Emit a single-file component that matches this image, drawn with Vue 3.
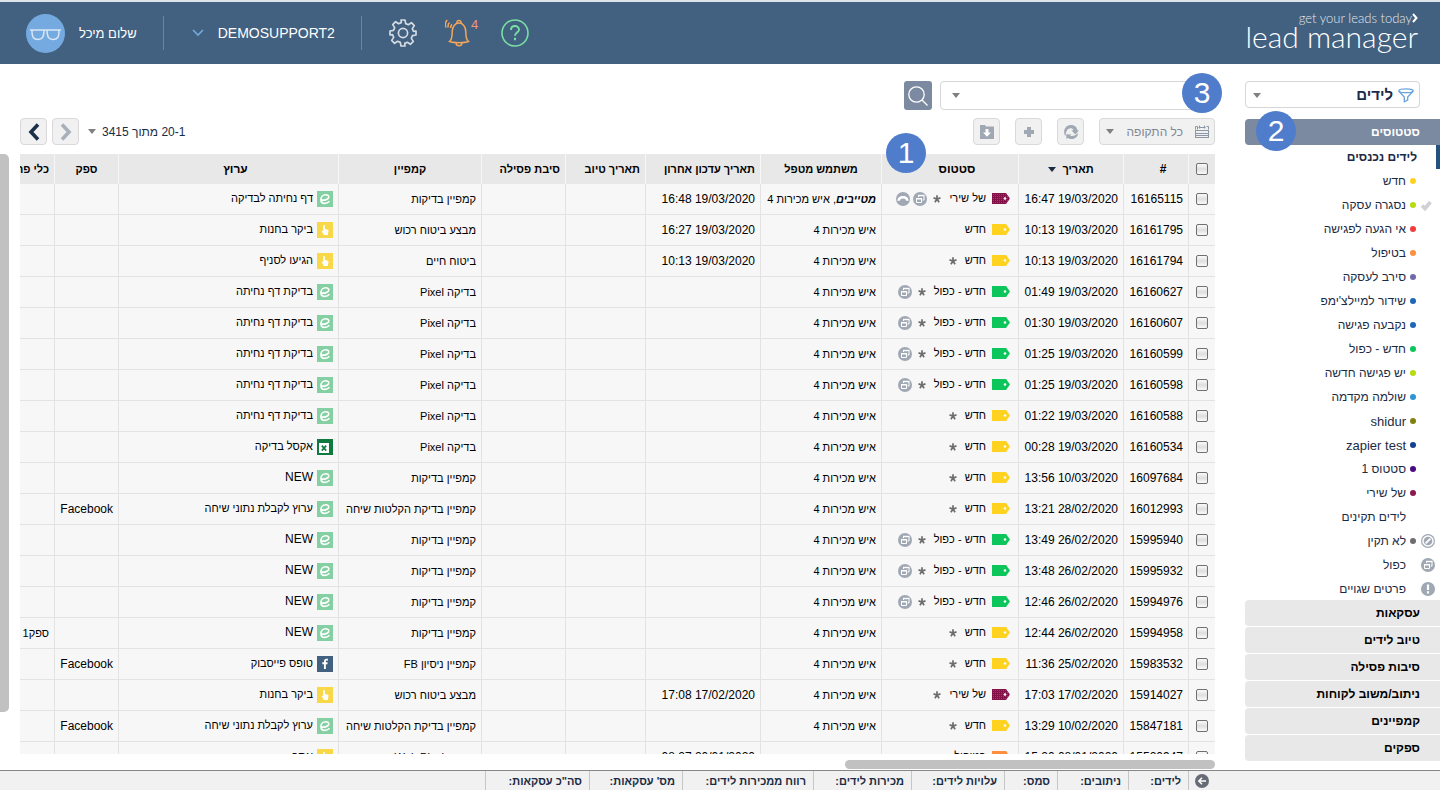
<script setup>
import { ref } from 'vue'

const yellow = '#ffd21f'
const green = '#0cc55b'
const maroon = 'url(#weave)'
const orange = '#ff8f3f'

const view = ref('leads')
const query = ref('')

const hebrew = (text) => /[א-ת]/.test(text || '')

const statuses = [
  { label: 'חדש', dot: '#ffd21f' },
  { label: 'נסגרה עסקה', dot: '#b5dc10', mark: 'check' },
  { label: 'אי הגעה לפגישה', dot: '#f23c3c' },
  { label: 'בטיפול', dot: '#ff8f3f' },
  { label: 'סירב לעסקה', dot: '#6f6ab0' },
  { label: "שידור למיילצ'ימפ", dot: '#1d67b5' },
  { label: 'נקבעה פגישה', dot: '#1d67b5' },
  { label: 'חדש - כפול', dot: '#0cc55b' },
  { label: 'יש פגישה חדשה', dot: '#b5dc10' },
  { label: 'שולמה מקדמה', dot: '#2f93d6' },
  { label: 'shidur', dot: '#808010' },
  { label: 'zapier test', dot: '#144091' },
  { label: 'סטטוס 1', dot: '#4b0a82' },
  { label: 'של שירי', dot: '#8b1a4f' },
  { label: 'לידים תקינים' },
  { label: 'לא תקין', dot: '#6e6e72', mark: 'ban' },
  { label: 'כפול', mark: 'dup' },
  { label: 'פרטים שגויים', mark: 'alert' },
]

const sections = ['עסקאות', 'טיוב לידים', 'סיבות פסילה', 'ניתוב/משוב לקוחות', 'קמפיינים', 'ספקים']

const columns = [
  { key: 'id', label: '#', align: 'offset' },
  { key: 'date', label: 'תאריך', sorted: true },
  { key: 'status', label: 'סטטוס', align: 'offset' },
  { key: 'user', label: 'משתמש מטפל' },
  { key: 'updated', label: 'תאריך עדכון אחרון', align: 'start' },
  { key: 'refined', label: 'תאריך טיוב', align: 'start' },
  { key: 'reason', label: 'סיבת פסילה', align: 'start' },
  { key: 'campaign', label: 'קמפיין' },
  { key: 'channel', label: 'ערוץ', align: 'offset' },
  { key: 'supplier', label: 'ספק' },
  { key: 'media', label: 'כלי פרסום', align: 'start' },
]

const seller = 'איש מכירות 4'
const fresh = { text: 'חדש', color: yellow, star: true }
const twice = { text: 'חדש - כפול', color: green, star: true, dup: true }

const rows = [
  { id: '16165115', date: '19/03/2020 16:47', status: { text: 'של שירי', color: maroon, star: true, dup: true, call: true }, lead: 'מטייבים', user: seller, updated: '19/03/2020 16:48', campaign: 'קמפיין בדיקות', icon: 'e', channel: 'דף נחיתה לבדיקה' },
  { id: '16161795', date: '19/03/2020 10:13', status: { text: 'חדש', color: yellow }, user: seller, updated: '19/03/2020 16:27', campaign: 'מבצע ביטוח רכוש', icon: 'hand', channel: 'ביקר בחנות' },
  { id: '16161794', date: '19/03/2020 10:13', status: fresh, user: seller, updated: '19/03/2020 10:13', campaign: 'ביטוח חיים', icon: 'hand', channel: 'הגיעו לסניף' },
  { id: '16160627', date: '19/03/2020 01:49', status: twice, user: seller, campaign: 'בדיקה Pixel', icon: 'e', channel: 'בדיקת דף נחיתה' },
  { id: '16160607', date: '19/03/2020 01:30', status: twice, user: seller, campaign: 'בדיקה Pixel', icon: 'e', channel: 'בדיקת דף נחיתה' },
  { id: '16160599', date: '19/03/2020 01:25', status: twice, user: seller, campaign: 'בדיקה Pixel', icon: 'e', channel: 'בדיקת דף נחיתה' },
  { id: '16160598', date: '19/03/2020 01:25', status: twice, user: seller, campaign: 'בדיקה Pixel', icon: 'e', channel: 'בדיקת דף נחיתה' },
  { id: '16160588', date: '19/03/2020 01:22', status: fresh, user: seller, campaign: 'בדיקה Pixel', icon: 'e', channel: 'בדיקת דף נחיתה' },
  { id: '16160534', date: '19/03/2020 00:28', status: fresh, user: seller, campaign: 'בדיקה Pixel', icon: 'x', channel: 'אקסל בדיקה' },
  { id: '16097684', date: '10/03/2020 13:56', status: fresh, user: seller, campaign: 'קמפיין בדיקות', icon: 'e', channel: 'NEW' },
  { id: '16012993', date: '28/02/2020 13:21', status: fresh, user: seller, campaign: 'קמפיין בדיקת הקלטות שיחה', icon: 'e', channel: 'ערוץ לקבלת נתוני שיחה', supplier: 'Facebook' },
  { id: '15995940', date: '26/02/2020 13:49', status: twice, user: seller, campaign: 'קמפיין בדיקות', icon: 'e', channel: 'NEW' },
  { id: '15995932', date: '26/02/2020 13:48', status: twice, user: seller, campaign: 'קמפיין בדיקות', icon: 'e', channel: 'NEW' },
  { id: '15994976', date: '26/02/2020 12:46', status: twice, user: seller, campaign: 'קמפיין בדיקות', icon: 'e', channel: 'NEW' },
  { id: '15994958', date: '26/02/2020 12:44', status: fresh, user: seller, campaign: 'קמפיין בדיקות', icon: 'e', channel: 'NEW', media: 'ספק1' },
  { id: '15983532', date: '25/02/2020 11:36', status: fresh, user: seller, campaign: 'קמפיין ניסיון FB', icon: 'f', channel: 'טופס פייסבוק', supplier: 'Facebook' },
  { id: '15914027', date: '17/02/2020 17:03', status: { text: 'של שירי', color: maroon, star: true }, user: seller, updated: '17/02/2020 17:08', campaign: 'מבצע ביטוח רכוש', icon: 'hand', channel: 'ביקר בחנות' },
  { id: '15847181', date: '10/02/2020 13:29', status: fresh, user: seller, campaign: 'קמפיין בדיקת הקלטות שיחה', icon: 'e', channel: 'ערוץ לקבלת נתוני שיחה', supplier: 'Facebook' },
  { id: '15520947', date: '08/01/2020 15:20', status: { text: 'בטיפול', color: orange }, user: '', updated: '20/01/2020 08:27', campaign: 'בדיקה Web Pixel', icon: 'hand', channel: 'אתר' },
]

const totals = ['לידים:', 'ניתובים:', 'סמס:', 'עלויות לידים:', 'מכירות לידים:', 'רווח ממכירות לידים:', "מס' עסקאות:", 'סה"כ עסקאות:']
</script>

<template>
  <div class="app" dir="rtl">
    <svg class="defs" width="0" height="0" aria-hidden="true">
      <pattern id="weave" width="2" height="2" patternUnits="userSpaceOnUse">
        <rect width="2" height="2" fill="#861048" />
        <rect x="1" y="1" width="1" height="1" fill="#a23a5c" />
      </pattern>
      <symbol id="dup" viewBox="0 0 14 14">
        <circle cx="7" cy="7" r="7" fill="#a0a8b4" />
        <path d="M5.500 5V3.500h5.500v4.500H9.500" fill="none" stroke="#fff" />
        <path d="M5 3.500h6.500" stroke="#fff" stroke-width="1.400" />
        <path d="M3.500 6.500h5v4h-5z" fill="#a0a8b4" stroke="#fff" />
        <path d="M3 6.800h6" stroke="#fff" stroke-width="1.400" />
      </symbol>
      <symbol id="call" viewBox="0 0 14 14">
        <circle cx="7" cy="7" r="7" fill="#a0a8b4" />
        <path d="M1.500 9C1 5.600 4 4 7 4s6 1.600 5.500 5L9.800 8.600 9.300 7a7 7 0 0 0-4.600 0L4.200 8.600z" fill="#fff" />
      </symbol>
      <symbol id="ban" viewBox="0 0 14 14">
        <circle cx="7" cy="7" r="6.400" fill="#fff" stroke="#a0a8b4" stroke-width="1.200" />
        <circle cx="7" cy="7" r="4.300" fill="#a0a8b4" />
        <path d="M4.600 9.400l4.800-4.800" stroke="#fff" stroke-width="1.800" />
      </symbol>
      <symbol id="alert" viewBox="0 0 14 14">
        <circle cx="7" cy="7" r="7" fill="#a0a8b4" />
        <path d="M5.900 2.500h2.200v5.500H5.900zM5.900 9.300h2.200v2.200H5.900z" fill="#fff" />
      </symbol>
      <symbol id="check" viewBox="0 0 14 14">
        <path d="M1 7.500l3 3 5.500-6.500" fill="none" stroke="#cfd1d6" stroke-width="3.600" />
      </symbol>
      <symbol id="star" viewBox="0 0 8 8">
        <path d="M4 4V.3M4 4L.5 2.900M4 4l3.500-1.100M4 4L1.900 7.200M4 4l2.100 3.200" fill="none" stroke="#6d6d6d" stroke-width="1.700" />
      </symbol>
      <symbol id="src-e" viewBox="0 0 16 16">
        <rect width="16" height="16" fill="#84d0a3" />
        <path d="M4 9c3.500.6 7.800-.6 7.800-3 0-1.300-1.200-2.200-3.100-2.200C5.700 3.800 3.900 6 3.900 8.500c0 2.400 1.500 3.900 3.800 3.900 2 0 3.400-.7 4.800-2.100" fill="none" stroke="#fff" stroke-width="1.600" />
      </symbol>
      <symbol id="src-hand" viewBox="0 0 16 16">
        <rect width="16" height="16" fill="#f8d848" />
        <path d="M6.200 3.200c.9-.6 1.700-.1 1.700.8v3l3 .8c.7.300.6 1 .5 1.600L10.800 13H6.900L4.700 9.300c.1-.8.900-.8 1.500-.2z" fill="#fff" />
      </symbol>
      <symbol id="src-x" viewBox="0 0 16 16">
        <rect width="16" height="16" fill="#0f7a40" />
        <rect x="2" y="4" width="10" height="10" fill="#fff" />
        <path d="M4.800 6.600l4.400 5M9.200 6.600l-4.400 5" stroke="#0f7a40" stroke-width="1.600" />
      </symbol>
      <symbol id="src-f" viewBox="0 0 16 16">
        <rect width="16" height="16" fill="#42607f" />
        <path d="M7.900 13V5.300c0-1.300.8-1.900 3-1.600M5.300 7.300h5.200" fill="none" stroke="#fff" stroke-width="1.900" />
      </symbol>
    </svg>

    <header class="top" dir="ltr">
      <div class="user">
        <svg width="39" height="39" viewBox="0 0 39 39" aria-hidden="true">
          <circle cx="19.500" cy="19.500" r="19.500" fill="#74aae0" />
          <path d="M4 16h31M6 16.300c0 7 1.500 9.200 6 9.200s5.800-2.500 6-9.200M21 16.300c.2 6.700 1.500 9.200 6 9.200s6-2.200 6-9.200" fill="none" stroke="#d8e6f6" stroke-width="1.500" />
        </svg>
        <span>שלום מיכל</span>
      </div>
      <button class="account" type="button">
        <svg width="12" height="8" viewBox="0 0 12 8" aria-hidden="true"><path d="M1 1l5 5 5-5" fill="none" stroke="#74aae0" stroke-width="1.600" /></svg>
        <span>DEMOSUPPORT2</span>
      </button>
      <nav class="tools">
        <button type="button" aria-label="הגדרות">
          <svg width="28" height="28" viewBox="0 0 28 28" fill="none" stroke="#d5dbe2" stroke-width="1.700" stroke-linejoin="round">
            <path d="M12 1h4l.7 3.600 2.700 1.100 3-2 2.900 2.900-2 3 1.100 2.700L27 12v4l-3.600.7-1.100 2.700 2 3-2.900 2.900-3-2-2.700 1.100L16 27h-4l-.7-3.600-2.700-1.100-3 2-2.900-2.900 2-3-1.100-2.700L1 16v-4l3.600-.7 1.100-2.700-2-3 2.900-2.900 3 2 2.700-1.100z" />
            <circle cx="14" cy="14" r="4.600" />
          </svg>
        </button>
        <button type="button" class="bell" aria-label="התראות">
          <svg width="26" height="28" viewBox="0 0 26 28" fill="none" stroke="#f2a65a" stroke-width="1.500">
            <path d="M4.500 22.500c3-2.500 2.500-6 2.700-10 .2-5.500 3.300-8.500 6.800-8.500s6.600 3 6.800 8.500c.2 4-.3 7.500 2.700 10-4 1.500-15 1.500-19 0z" />
            <path d="M12 4c-.5-3.500 4.500-3.500 4 0M11 23.800c0 4 6 4 6 0M4.500 3.500C3 4.800 2.800 6.500 3.200 8.500M2.200 1C.3 3 0 6 1 8.500M7 5.300C5.800 6.300 5.500 7.500 5.700 9" />
          </svg>
          <span>4</span>
        </button>
        <button type="button" class="help" aria-label="עזרה">
          <svg width="28" height="28" viewBox="0 0 28 28" fill="none" stroke="#79dfa5">
            <circle cx="14" cy="14" r="13" stroke-width="1.600" />
            <path d="M10 11c0-5.300 8-5 8-.6 0 3.200-4 3-4 6.400" stroke-width="1.900" />
            <path d="M14 18.800v2.400" stroke-width="2" />
          </svg>
        </button>
      </nav>
      <a class="logo" href="#">
        <span class="tag">get your leads today<svg width="6" height="10" viewBox="0 0 6 10" aria-hidden="true"><path d="M1 1l3.500 4L1 9" fill="none" stroke="#fff" stroke-width="2" /></svg></span>
        <span class="name">lead manager</span>
      </a>
    </header>

    <div class="body">
      <aside class="side">
        <div class="view">
          <select v-model="view" aria-label="תצוגה">
            <option value="leads">לידים</option>
          </select>
          <svg class="funnel" width="16" height="15" viewBox="0 0 16 15" fill="none" stroke="#6aa3dc" stroke-width="1.300" aria-hidden="true">
            <ellipse cx="8" cy="2.700" rx="7.200" ry="1.900" />
            <path d="M.9 3.200L6.300 9v4.800l3.400-1.600V9l5.400-5.800" />
          </svg>
          <i class="caret view-caret"></i>
        </div>
        <div class="group active">
          <a href="#">סטטוסים</a>
          <b class="badge badge-two">2</b>
        </div>
        <ul class="list">
          <li class="current"><a href="#">לידים נכנסים</a></li>
          <li v-for="s in statuses" :key="s.label">
            <span class="mark"><svg v-if="s.mark" width="14" height="14"><use :href="'#' + s.mark" /></svg></span>
            <span class="dot" :style="{ background: s.dot }"></span>
            <a href="#" :class="{ latin: !hebrew(s.label) }">{{ s.label }}</a>
          </li>
        </ul>
        <div class="groups">
          <div v-for="s in sections" :key="s" class="group"><a href="#">{{ s }}</a></div>
        </div>
      </aside>

      <main class="main">
        <div class="search">
          <div class="field">
            <input v-model="query" type="text" aria-label="חיפוש" />
            <i class="caret field-caret"></i>
            <b class="badge badge-three">3</b>
          </div>
          <button type="button" aria-label="חפש">
            <svg width="20" height="20" viewBox="0 0 20 20" fill="none" stroke="#fff" stroke-width="1.300"><circle cx="8.500" cy="8.500" r="7.700" /><path d="M14 14l5.500 5.500" /></svg>
          </button>
        </div>

        <div class="bar">
          <button type="button" class="period">
            <svg width="14" height="14" viewBox="0 0 14 14" aria-hidden="true"><path d="M.5 4.500v-3h2v3M3.500 2.500h7M4.500.5v3M9.500.5v3M13.500 4.500v-3h-2" fill="none" stroke="#8c96a5" /><path d="M0 5.500h14M0 8.500h14M0 10.500h14M0 12.500h14M.5 5v8M13.500 5v8" stroke="#8c96a5" /></svg>
            <span>כל התקופה</span>
            <i class="caret"></i>
          </button>
          <button type="button" class="tool" aria-label="רענון">
            <svg width="16" height="16" viewBox="0 0 16 16"><path d="M2.300 12.200C-.6 7.500 2 1 8 1c4 0 6 2.500 6.300 5.200H16L12.300 10.500 8.300 6.200h2.200C9.500 3.500 5 3.600 3.600 7c-.7 1.700-.7 3.500-1.300 5.200z" fill="#a0a8b4" /><path d="M15 9c0 3.500-2.500 6-6.500 6-1.500 0-2.700-.3-3.800-1L3.500 15.300l-.3-5 5.300.2-1.400 1.300c3 .7 6-.6 7.900-2.800z" fill="#a0a8b4" /></svg>
          </button>
          <button type="button" class="tool" aria-label="הוספה">
            <svg width="12" height="12" viewBox="0 0 12 12"><path d="M4 1h4v3h3v4H8v3H4V8H1V4h3z" fill="#a0a8b4" /></svg>
          </button>
          <button type="button" class="tool" aria-label="הורדה">
            <svg width="14" height="14" viewBox="0 0 14 14"><path d="M0 0h5l1 1.500h8V14H0z" fill="#a0a8b4" /><path d="M5.500 4h3v3.500H11l-4 4.200-4-4.200h2.500z" fill="#fff" /></svg>
          </button>
          <div class="pager">
            <button type="button" class="range"><span>20-1 מתוך 3415</span><i class="caret"></i></button>
            <button type="button" class="tool" aria-label="הקודם"><svg width="12" height="18" viewBox="0 0 12 18"><path d="M2 1.500L9 9l-7 7.500" fill="none" stroke="#a8b0ba" stroke-width="3.600" /></svg></button>
            <button type="button" class="tool" aria-label="הבא"><svg width="12" height="18" viewBox="0 0 12 18"><path d="M10 1.500L3 9l7 7.500" fill="none" stroke="#1b3049" stroke-width="3.600" /></svg></button>
          </div>
        </div>

        <div class="sheet">
          <div class="clip">
            <table>
              <colgroup>
                <col class="w-check" /><col class="w-id" /><col class="w-date" /><col class="w-status" /><col class="w-user" /><col class="w-updated" />
                <col class="w-refined" /><col class="w-reason" /><col class="w-campaign" /><col /><col class="w-supplier" /><col class="w-media" />
              </colgroup>
              <thead>
                <tr>
                  <th><input type="checkbox" aria-label="בחר הכל" /></th>
                  <th v-for="c in columns" :key="c.key" :class="c.align">{{ c.label }}<i v-if="c.sorted" class="caret sort"></i></th>
                </tr>
              </thead>
              <tbody>
                <tr v-for="r in rows" :key="r.id">
                  <td><input type="checkbox" :aria-label="r.id" /></td>
                  <td>{{ r.id }}</td>
                  <td>{{ r.date }}</td>
                  <td>
                    <div class="status">
                      <svg class="flag" width="18" height="11" viewBox="0 0 18 11" aria-hidden="true"><path d="M0 0h14l4 5.500-4 5.500H0z" :fill="r.status.color" /><circle cx="13" cy="5.500" r="1.300" fill="#fff" /></svg>
                      <span class="label">{{ r.status.text }}</span>
                      <svg v-if="r.status.star" class="star" width="8" height="8"><use href="#star" /></svg>
                      <svg v-if="r.status.dup" width="14" height="14"><use href="#dup" /></svg>
                      <svg v-if="r.status.call" class="call" width="14" height="14"><use href="#call" /></svg>
                    </div>
                  </td>
                  <td class="he"><template v-if="r.lead"><b class="lead">{{ r.lead }}</b>, </template>{{ r.user }}</td>
                  <td>{{ r.updated }}</td>
                  <td></td>
                  <td></td>
                  <td class="he">{{ r.campaign }}</td>
                  <td :class="{ he: hebrew(r.channel) }">
                    <div class="channel">
                      <svg width="16" height="16" aria-hidden="true"><use :href="'#src-' + r.icon" /></svg>
                      <span>{{ r.channel }}</span>
                    </div>
                  </td>
                  <td>{{ r.supplier }}</td>
                  <td class="he">{{ r.media }}</td>
                </tr>
              </tbody>
            </table>
          </div>
          <div class="rail"><div class="thumb"></div></div>
          <b class="badge badge-one">1</b>
        </div>
        <div class="hrail"><div class="hthumb"></div></div>
      </main>
    </div>

    <footer class="totals">
      <button type="button" aria-label="פתח סיכום">
        <svg width="14" height="14" viewBox="0 0 14 14"><circle cx="7" cy="7" r="7" fill="#666b75" /><path d="M11 7H4M7 3.800L3.800 7 7 10.200" fill="none" stroke="#fff" stroke-width="1.500" /></svg>
      </button>
      <span v-for="(t, i) in totals" :key="t" :class="'t' + i">{{ t }}</span>
    </footer>
  </div>
</template>

<style>
body { margin: 0; background: #fff; }
</style>

<style scoped>
.app {
  display: flex;
  flex-direction: column;
  height: 100vh;
  overflow: hidden;
  font-family: "Liberation Sans", Arial, sans-serif;
  font-size: 12px;
  color: #000;
}
.app * { box-sizing: border-box; }
.defs { position: absolute; }
button { font: inherit; color: inherit; background: none; border: 0; padding: 0; margin: 0; display: flex; align-items: center; justify-content: center; white-space: nowrap; }
a { color: inherit; text-decoration: none; }
svg { display: block; flex: none; }
.caret { flex: none; width: 0; height: 0; border: 4px solid transparent; border-top: 5px solid #808080; border-bottom: 0; }

.top { flex: none; display: flex; align-items: center; height: 64px; border-top: 2px solid #dde3ea; background: #42607f; color: #fff; padding: 0 22px 0 26px; }
.user { display: flex; align-items: center; gap: 14px; height: 34px; padding-right: 26px; border-right: 1px solid #6d849c; font-size: 13px; }
.account { height: 34px; gap: 14px; padding: 0 26px 0 28px; border-right: 1px solid #6d849c; font-size: 14px; }
.tools { display: flex; align-items: center; padding-left: 27px; }
.bell { align-items: flex-start; margin-left: 28px; color: #f0977a; font-size: 13px; line-height: 12px; }
.help { margin-left: 23px; }
.logo { margin-left: auto; margin-bottom: 6px; display: flex; flex-direction: column; align-items: flex-end; font-family: Lato, "Open Sans", sans-serif; font-weight: 300; color: #fff; }
.tag { display: flex; align-items: center; font-size: 13px; line-height: 12px; color: #e4e9ef; }
.name { font-size: 30px; line-height: 24px; }

.body { flex: 1; min-height: 0; display: flex; gap: 30px; padding-top: 17px; }
.side { flex: none; width: 195px; color: #1b2b45; }
.view { position: relative; margin-right: 20px; height: 27px; }
.view select { width: 100%; height: 100%; appearance: none; border: 1px solid #d6d6d6; border-radius: 4px; background: #fff; font: bold 15px "Liberation Sans", Arial, sans-serif; color: #1b2b45; padding: 0 26px 0 20px; }
.funnel { position: absolute; right: 6px; top: 7px; pointer-events: none; }
.view-caret { position: absolute; left: 8px; top: 12px; pointer-events: none; }
.group { position: relative; height: 26px; display: flex; align-items: center; padding-right: 20px; background: #e8e8e8; border-radius: 4px 0 0 4px; font-weight: bold; color: #000; }
.group.active { margin-top: 11px; background: #7b8aa1; color: #fff; }
.list { list-style: none; margin: 0; padding: 0; }
.list li { display: flex; align-items: center; height: 24px; padding-right: 5px; }
.list .current { padding-right: 19px; border-right: 4px solid #24527f; font-weight: bold; }
.latin { font-size: 13px; }
.mark { width: 14px; height: 14px; }
.dot { width: 6px; height: 6px; border-radius: 50%; margin: 0 5px 0 4px; }
.groups { display: flex; flex-direction: column; gap: 1px; margin-top: -1px; }

.main { flex: 1; min-width: 0; display: flex; flex-direction: column; padding-left: 20px; }
.search { display: flex; gap: 8px; }
.field { position: relative; width: 275px; height: 29px; }
.field input { width: 100%; height: 100%; border: 1px solid #d6d6d6; border-radius: 4px; padding: 0 40px 0 24px; font: inherit; }
.field-caret { position: absolute; left: 12px; top: 12px; }
.search button { width: 28px; height: 29px; border-radius: 3px; background: #7b8aa1; }
.bar { display: flex; align-items: center; gap: 15px; margin-top: 8px; }
.tool { width: 27px; height: 27px; border: 1px solid #d9d9d9; border-radius: 4px; background: #f1f1f1; }
.period { width: 116px; height: 27px; justify-content: flex-start; gap: 12px; padding: 0 5px; border: 1px solid #d9d9d9; border-radius: 4px; background: #f1f1f1; color: #7f8794; }
.pager { display: flex; align-items: center; gap: 5px; margin-right: auto; }
.range { gap: 6px; margin-left: 4px; color: #1b2b45; }

.sheet { position: relative; flex: 1; min-height: 0; margin-top: 9px; }
.clip { height: 100%; overflow: hidden; }
table { width: 100%; table-layout: fixed; border-collapse: separate; border-spacing: 0; }
.w-check { width: 27px; }
.w-id { width: 65px; }
.w-date { width: 105px; }
.w-status { width: 137px; }
.w-user { width: 121px; }
.w-updated { width: 115px; }
.w-refined { width: 80px; }
.w-reason { width: 84px; }
.w-campaign { width: 143px; }
.w-supplier { width: 64px; }
.w-media { width: 34px; }
th, td { overflow: hidden; white-space: nowrap; padding: 0 5px; border-left: 1px solid #e3e3e3; }
th { height: 30px; background: #e8e8e8; border-left-color: #f7f7f7; text-align: center; font-size: 11px; }
td { height: 31px; background: #f7f7f7; border-bottom: 1px solid #e3e3e3; text-align: right; }
th.start { text-align: right; }
th.offset { padding: 0 0 0 14px; padding: 0; text-indent: -14px; font-size: 12px; }
th:first-child, td:first-child { padding: 0 7px; }
th:last-child, td:last-child { border-left: 0; padding-left: 0; }
td.he { font-size: 11px; }
.sort { display: inline-block; margin-right: 6px; vertical-align: 1px; border-top-color: #1b2b45; }
.clip input { display: block; appearance: none; width: 12px; height: 12px; margin: 0; border: 1px solid #707070; border-radius: 2px; background: linear-gradient(#fafafa, #dedede 50%, #fafafa); }
.status { display: flex; align-items: center; padding-right: 3px; font-size: 11px; }
.flag { margin-bottom: 2px; }
.label { margin-right: 6px; margin-bottom: 2px; }
.star { margin: 0 8px 0 6px; }
.call { margin-right: 3px; }
.lead { font-style: italic; }
.channel { display: flex; align-items: center; gap: 4px; }
.channel span { margin-bottom: 2px; }
.rail { position: absolute; left: -20px; top: 0; width: 9px; height: 100%; }
.thumb { height: 93%; border-radius: 0 5px 5px 0; background: #c1c1c1; }
.hrail { flex: none; padding-top: 6px; height: 16px; }
.hthumb { width: 31%; height: 9px; border-radius: 5px; background: #c1c1c1; }

.badge { position: absolute; width: 40px; height: 40px; border-radius: 50%; background: #4f7dcb; color: #fff; font-size: 30px; font-weight: normal; line-height: 40px; text-align: center; }
.badge-one { right: 289px; top: -21px; }
.badge-two { left: 11px; top: -8px; }
.badge-three { right: -7px; top: -8px; }

.totals { flex: none; display: flex; height: 20px; padding-right: 225px; border-top: 1px solid #888; background: #f1f1f1; color: #1b2b45; font-size: 11px; font-weight: bold; line-height: 20px; }
.totals button { width: 27px; border-left: 1px solid #c6c6c6; }
.totals span { padding-right: 7px; border-left: 1px solid #c6c6c6; white-space: nowrap; }
.t0 { width: 60px; }
.t1 { width: 71px; }
.t2 { width: 53px; }
.t3 { width: 93px; }
.t4 { width: 98px; }
.t5 { width: 131px; }
.t6 { width: 93px; }
.t7 { width: 104px; }
</style>
